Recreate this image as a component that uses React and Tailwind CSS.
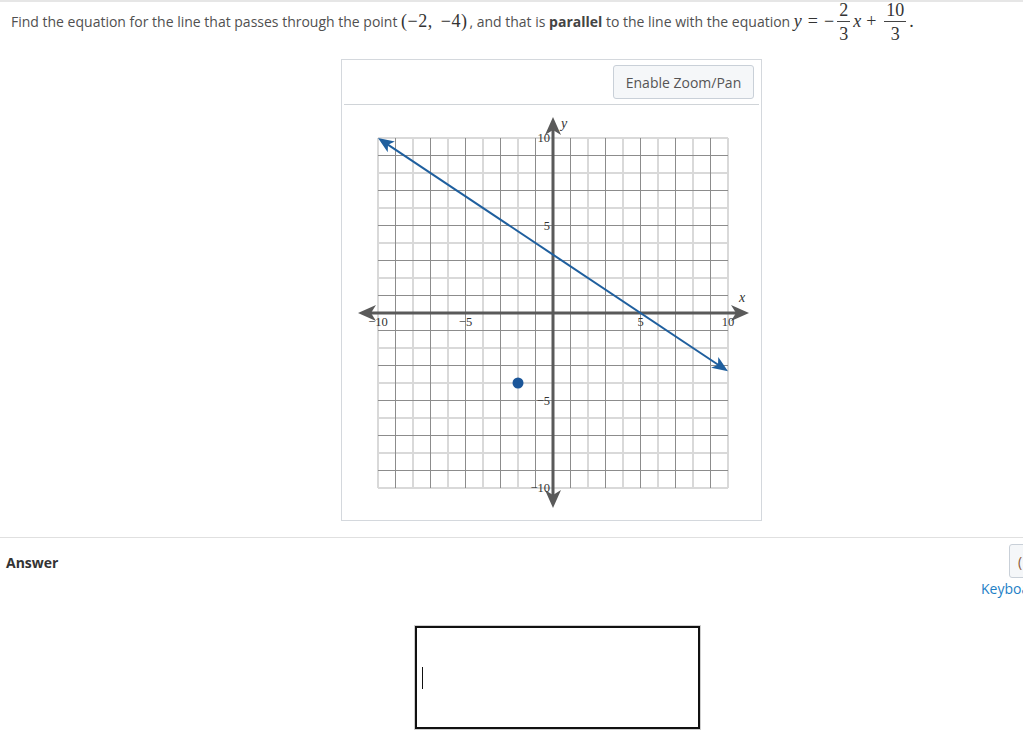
import React from 'react';

const ORIGIN_X = 552;
const ORIGIN_Y = 313;
const UNIT = 17.5;
const px = (v) => ORIGIN_X + v * UNIT;
const py = (v) => ORIGIN_Y - v * UNIT;

const SERIF = { fontFamily: "'Liberation Serif', 'DejaVu Serif', serif" };

const Frac = ({ num, den }) => (
  <span className="inline-flex flex-col items-center mx-[3px] leading-none">
    <span className="px-[2px] pb-[2px]">{num}</span>
    <span className="border-t border-[#444] w-full text-center pt-[3px] px-[2px]">{den}</span>
  </span>
);

const arrowHead = (tipX, tipY, dx, dy, len = 16, half = 7, notch = 5) => {
  const n = Math.hypot(dx, dy);
  const ux = dx / n;
  const uy = dy / n;
  const bx = tipX - ux * len;
  const by = tipY - uy * len;
  const nx = tipX - ux * (len - notch);
  const ny = tipY - uy * (len - notch);
  return `${tipX},${tipY} ${bx - uy * half},${by + ux * half} ${nx},${ny} ${bx + uy * half},${by - ux * half}`;
};

const Graph = () => {
  const ticks = [];
  for (let i = -10; i <= 10; i++) ticks.push(i);
  const left = px(-10);
  const right = px(10);
  const top = py(10);
  const bottom = py(-10);
  const lx1 = px(-10), ly1 = py(10);
  const lx2 = px(10), ly2 = py(-10 / 3);

  return (
    <svg width="421" height="416" className="block">
      <g transform="translate(-341,-105)">
        {ticks.filter(i => i % 2 === 0).map(i => (
          <g key={'l' + i}>
            <line x1={px(i)} y1={top} x2={px(i)} y2={bottom} stroke="#d9d9d9" strokeWidth="2" />
            <line x1={left} y1={py(i)} x2={right} y2={py(i)} stroke="#d9d9d9" strokeWidth="2" />
          </g>
        ))}
        {ticks.filter(i => i % 2 !== 0).map(i => (
          <g key={'d' + i}>
            <line x1={px(i)} y1={top} x2={px(i)} y2={bottom} stroke="#8c8c8c" strokeWidth="1" />
            <line x1={left} y1={py(i)} x2={right} y2={py(i)} stroke="#8c8c8c" strokeWidth="1" />
          </g>
        ))}

        <line x1="362" y1={ORIGIN_Y} x2="742" y2={ORIGIN_Y} stroke="#5a5a5a" strokeWidth="3" />
        <line x1={ORIGIN_X} y1="122" x2={ORIGIN_X} y2="503" stroke="#5a5a5a" strokeWidth="3" />
        <polygon points={arrowHead(357, ORIGIN_Y, -1, 0, 18, 8, 5)} fill="#5a5a5a" />
        <polygon points={arrowHead(748, ORIGIN_Y, 1, 0, 18, 8, 5)} fill="#5a5a5a" />
        <polygon points={arrowHead(ORIGIN_X, 117, 0, -1, 18, 8, 5)} fill="#5a5a5a" />
        <polygon points={arrowHead(ORIGIN_X, 508, 0, 1, 18, 8, 5)} fill="#5a5a5a" />

        <g fontFamily="'Liberation Serif', 'DejaVu Serif', serif" fontSize="12.5" fill="#333">
          <text x={px(-10)} y="326" textAnchor="middle">−10</text>
          <text x={px(-5)} y="326" textAnchor="middle">−5</text>
          <text x={px(5)} y="326" textAnchor="middle">5</text>
          <text x={px(10)} y="326" textAnchor="middle">10</text>
          <text x="549" y={py(10) + 4} textAnchor="end">10</text>
          <text x="549" y={py(5) + 4} textAnchor="end">5</text>
          <text x="549" y={py(-5) + 4} textAnchor="end">−5</text>
          <text x="549" y={py(-10) + 4} textAnchor="end">−10</text>
          <text x="560" y="128" fontStyle="italic" fontSize="14">y</text>
          <text x="738" y="302" fontStyle="italic" fontSize="14">x</text>
        </g>

        <line x1={lx1 + 8} y1={ly1 + 5.3} x2={lx2 - 8} y2={ly2 - 5.3} stroke="#1f5f9e" strokeWidth="2" />
        <polygon points={arrowHead(lx1, ly1, lx1 - lx2, ly1 - ly2, 16, 6.5, 4)} fill="#1f5f9e" />
        <polygon points={arrowHead(lx2, ly2, lx2 - lx1, ly2 - ly1, 16, 6.5, 4)} fill="#1f5f9e" />

        <circle cx={px(-2)} cy={py(-4)} r="5.5" fill="#1b5699" />
      </g>
    </svg>
  );
};

export default function App() {
  return (
    <div className="w-[1023px] h-[738px] overflow-hidden bg-white text-[#505050]" style={{ fontFamily: "'Open Sans', 'Noto Sans', sans-serif" }}>
      <div className="w-[1103px]">
        <div className="border-t-2 border-[#e6e6e6] h-[41px] pl-[11px] flex items-center text-[14px] whitespace-nowrap">
          <span>Find the equation for the line that passes through the point&nbsp;</span>
          <span className="text-[18px] text-[#333] flex items-center tracking-[0.5px]" style={SERIF}>
            <span>(−2,</span>
            <span className="ml-[8px]">−4)</span>
          </span>
          <span className="ml-[2px]">, and that is&nbsp;</span>
          <b className="font-bold text-[#444]">parallel</b>
          <span>&nbsp;to the line with the equation&nbsp;</span>
          <span className="text-[18px] text-[#333] flex items-center" style={SERIF}>
            <i>y</i>
            <span className="mx-[6px]">=</span>
            <span>−</span>
            <Frac num="2" den="3" />
            <i>x</i>
            <span className="mx-[5px]">+</span>
            <Frac num="10" den="3" />
            <span>.</span>
          </span>
        </div>

        <div className="flex justify-center mt-[18px]">
          <div className="w-[421px] h-[462px] border border-[#d4d8dd] flex flex-col">
            <div className="h-[44px] flex justify-end items-start pt-[5px] pr-[7px]">
              <button className="h-[34px] w-[141px] border border-[#c9d0d8] rounded-[3px] bg-[#f5f7f9] text-[14px] text-[#555]">
                Enable Zoom/Pan
              </button>
            </div>
            <div className="mx-[2px] border-t border-[#d0d4d8]" />
            <Graph />
          </div>
        </div>

        <div className="mt-[16px] border-t border-[#e0e0e0] flex justify-between">
          <div className="pl-[6px] pt-[14px] text-[14px] font-bold text-[#333]">Answer</div>
          <div className="flex flex-col items-start pt-[6px] w-[122px] whitespace-nowrap">
            <button className="ml-[28px] h-[34px] w-[90px] border border-[#c9d0d8] rounded-[3px] bg-[#f5f7f9] text-[14px] text-[#8a5a3a] text-left pl-[8px]">
              ( Keypad
            </button>
            <a className="mt-[0px] text-[14px] text-[#1e7fc6]">Keyboard Shortcuts</a>
          </div>
        </div>

        <div className="flex pl-[414px] mt-[26px]">
          <div className="w-[287px] h-[105px] border border-[#cfcfcf]">
            <div className="w-full h-full border-2 border-[#111] flex items-center pl-[5px]">
              <div className="w-[1px] h-[22px] bg-[#111]" />
            </div>
          </div>
        </div>
      </div>
    </div>
  );
}
